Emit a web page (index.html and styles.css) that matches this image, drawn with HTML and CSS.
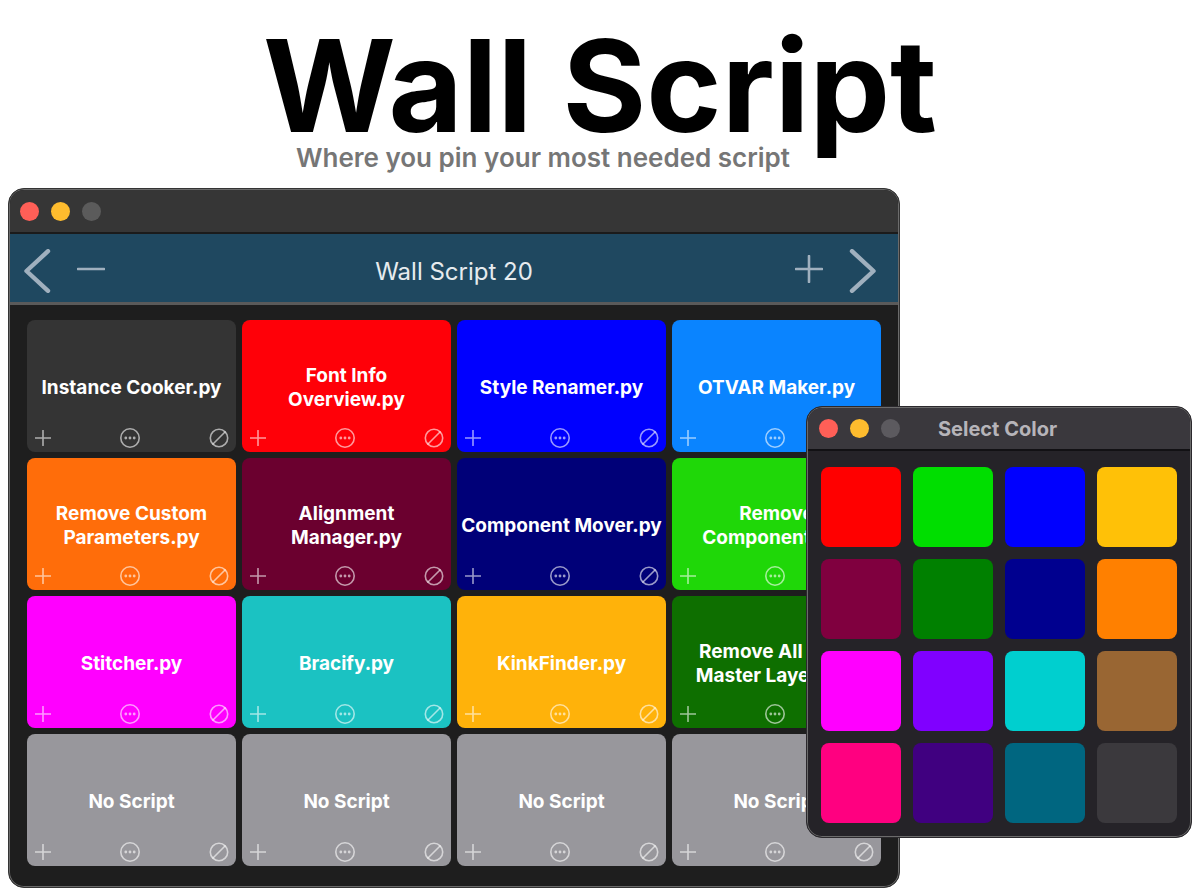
FILE: index.html
```html
<!DOCTYPE html>
<html lang="en">
<head>
<meta charset="utf-8">
<title>Wall Script</title>
<link rel="stylesheet" href="styles.css">
</head>
<body>
<svg class="defs" aria-hidden="true">
  <symbol id="plus" viewBox="0 0 16 16"><path d="M8 .5v15M.5 8h15"/></symbol>
  <symbol id="more" viewBox="0 0 20 20"><circle cx="10" cy="10" r="9.2"/><g class="dots"><circle cx="5.8" cy="10" r="1.4"/><circle cx="10" cy="10" r="1.4"/><circle cx="14.2" cy="10" r="1.4"/></g></symbol>
  <symbol id="none" viewBox="0 0 20 20"><circle cx="10" cy="10" r="8.7"/><path d="M4 16 16 4"/></symbol>
</svg>
<header class="hero">
  <h1 class="hero-title">Wall Script</h1>
  <p class="hero-sub">Where you pin your most needed script</p>
</header>
<main class="stage">
  <section class="window" aria-label="Wall Script">
    <div class="titlebar">
      <button class="light red" aria-label="Close"></button>
      <button class="light yellow" aria-label="Minimize"></button>
      <button class="light off" aria-label="Zoom" disabled></button>
    </div>
    <div class="toolbar">
      <div class="tools">
        <button class="tool" aria-label="Previous wall"><svg width="27" height="44" viewBox="0 0 27 44"><path class="chev" d="M24 2.2 2.5 22 24 41.8"/></svg></button>
        <button class="tool line-tool" aria-label="Remove wall"><svg width="28" height="28" viewBox="0 0 28 28"><path d="M1 14h26"/></svg></button>
      </div>
      <h2 class="wall-name">Wall Script 20</h2>
      <div class="tools">
        <button class="tool line-tool" aria-label="Add wall"><svg width="28" height="28" viewBox="0 0 28 28"><path d="M1 14h26M14 1v26"/></svg></button>
        <button class="tool" aria-label="Next wall"><svg width="27" height="44" viewBox="0 0 27 44"><path class="chev" d="M3 2.2 24.5 22 3 41.8"/></svg></button>
      </div>
    </div>
    <div class="wall" id="wall"></div>
  </section>
  <section class="window palette" aria-label="Select Color">
    <div class="titlebar">
      <button class="light red" aria-label="Close"></button>
      <button class="light yellow" aria-label="Minimize"></button>
      <button class="light off" aria-label="Zoom" disabled></button>
      <h2 class="palette-name">Select Color</h2>
    </div>
    <div class="swatches" id="swatches"></div>
  </section>
</main>
<script src="wall.js"></script>
</body>
</html>
```
FILE: styles.css
```css
* { box-sizing: border-box; }
body { margin: 0; padding: 28px 8px 8px; background: #fff; font-family: Inter, "Liberation Sans", sans-serif; }
h1, h2, p { margin: 0; }
button { padding: 0; border: 0; background: none; color: inherit; font: inherit; }
svg { display: block; fill: none; stroke: currentColor; stroke-linecap: round; stroke-linejoin: round; }
.defs { position: absolute; width: 0; height: 0; }

.hero { height: 160px; text-align: center; }
.hero-title { font-size: 128px; line-height: 116px; font-weight: 700; color: #000; white-space: nowrap; }
.hero-sub { padding-right: 114px; font-size: 26px; line-height: 28px; font-weight: 600; color: #767676; }

.stage { position: relative; padding-right: 292px; }
.window { border: 1px solid #343434; border-radius: 16px; overflow: hidden; background: #1e1e1e; box-shadow: inset 0 0 0 1px #6b6b6b; padding: 1px; }
.titlebar { display: flex; align-items: center; gap: 12px; height: 44px; padding: 0 10px; background: #363636; border-bottom: 2px solid #1b1b1b; border-radius: 14px 14px 0 0; }
.light { width: 19px; height: 19px; border-radius: 50%; }
.red { background: #ff5f57; }
.yellow { background: #febc2e; }
.off { background: #5b5b5b; }

.toolbar { display: grid; grid-template-columns: 1fr auto 1fr; align-items: center; height: 71px; padding: 6px 14px 0; background: #1f4860; border-bottom: 3px solid #5a5a5a; }
.tools { display: flex; align-items: center; gap: 26px; color: #a0b0be; }
.tools:last-child { justify-content: flex-end; padding-right: 8px; }
.tool svg { stroke-width: 2.6; }
.tool .chev { stroke-width: 4.4; }
.line-tool { padding-bottom: 4px; }
.wall-name { padding-top: 2px; font-size: 24px; line-height: 32px; font-weight: 400; color: #e6ebee; }

.wall { display: grid; grid-template-columns: repeat(4, 1fr); gap: 6px; padding: 15px 17px 20px; }
.tile { display: grid; height: 132px; border-radius: 8px; color: #fff; }
.tile-label { grid-area: 1 / 1; place-self: center; padding-top: 4px; font-size: 19px; line-height: 24px; font-weight: 700; text-align: center; white-space: pre-line; }
.tile-tools { grid-area: 1 / 1; align-self: end; display: flex; align-items: center; justify-content: space-between; padding: 0 7px 4px 8px; color: rgb(255 255 255 / 60%); }
.tile-tools svg { stroke-width: 1.6; }
.dots { fill: currentColor; stroke: none; }

.palette { position: absolute; top: 218px; right: 0; width: 386px; background: #252328; border-color: #2b292d; }
.palette .titlebar { height: 43px; padding-left: 11px; background: #3a383d; border-color: #121114; }
.palette .off { background: #5c5a5f; }
.palette-name { padding-left: 26px; font-size: 20px; line-height: 24px; font-weight: 700; color: #b6b4b9; }
.swatches { display: grid; grid-template-columns: repeat(4, 1fr); gap: 12px; padding: 16px 13px 13px; }
.swatch { height: 80px; border-radius: 8px; }
```
FILE: wall.js
```javascript
const scripts = [
  ["Instance Cooker.py", "#343434"], ["Font Info\nOverview.py", "#ff0008"], ["Style Renamer.py", "#0000ff"], ["OTVAR Maker.py", "#0a84ff"],
  ["Remove Custom\nParameters.py", "#ff6d0a"], ["Alignment\nManager.py", "#6b002f"], ["Component Mover.py", "#000078"], ["Remove\nComponents.py", "#1fd708"],
  ["Stitcher.py", "#ff00ff"], ["Bracify.py", "#1bc2c2"], ["KinkFinder.py", "#ffb20a"], ["Remove All Non-\nMaster Layers.py", "#0e6f00"],
  ["No Script", "#98979c"], ["No Script", "#98979c"], ["No Script", "#98979c"], ["No Script", "#98979c"]
];
const colors = ["#ff0000", "#00de00", "#0000ff", "#ffc107", "#80003f", "#008000", "#00008f", "#ff8000", "#ff00ff", "#8000ff", "#00cfcf", "#996633", "#ff0080", "#400080", "#006680", "#3b393d"];
const icon = (id, size) => `<svg width="${size}" height="${size}"><use href="#${id}"/></svg>`;

document.getElementById("wall").innerHTML = scripts.map(([name, color]) => `
  <article class="tile" style="background:${color}">
    <span class="tile-label">${name}</span>
    <div class="tile-tools">
      <button aria-label="Add script">${icon("plus", 16)}</button>
      <button aria-label="Choose color">${icon("more", 20)}</button>
      <button aria-label="Clear script">${icon("none", 20)}</button>
    </div>
  </article>`).join("");
document.getElementById("swatches").innerHTML = colors.map(color =>
  `<button class="swatch" aria-label="${color}" style="background:${color}"></button>`).join("");
```
